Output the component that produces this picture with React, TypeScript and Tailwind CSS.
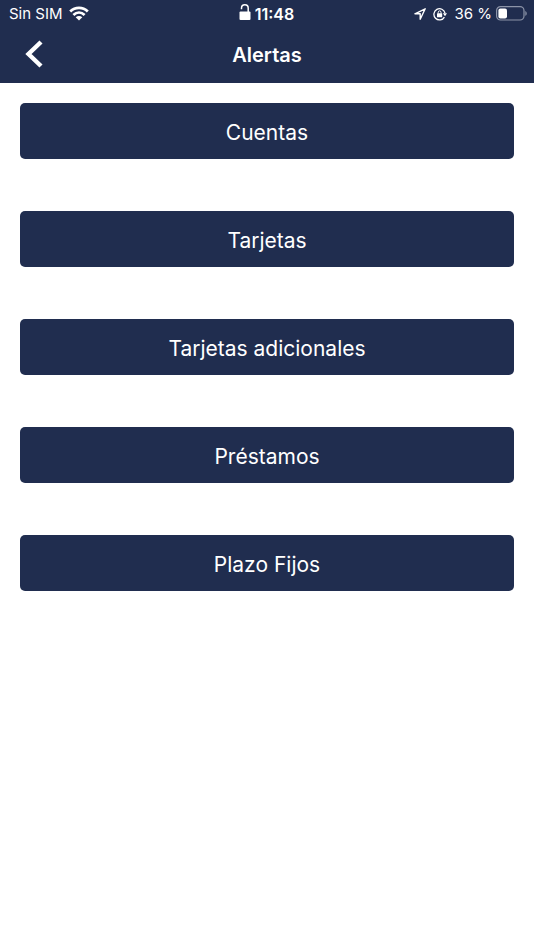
const sections = ['Cuentas', 'Tarjetas', 'Tarjetas adicionales', 'Préstamos', 'Plazo Fijos'];

function WifiIcon() {
  return (
    <svg className="h-4 w-5" viewBox="0 0 20 16" fill="none" stroke="white" strokeWidth="2.8" aria-hidden="true">
      <path d="M1.2 5.5C6.2 0.7 13.8 0.7 18.8 5.5" />
      <path d="M4.4 9C7.8 5.8 12.2 5.8 15.6 9" />
      <path d="M10 14.5 6.7 11.3C8.7 9.5 11.3 9.5 13.3 11.3Z" fill="white" stroke="none" />
    </svg>
  );
}

function UnlockIcon() {
  return (
    <svg className="h-4 w-3" viewBox="0 0 12 16" fill="none" aria-hidden="true">
      <rect x="0.5" y="7.4" width="11" height="8.6" rx="1" fill="white" />
      <path d="M2.5 5.2V4.2C2.5 -0.4 9.2 -0.4 9.2 4.2V8.5" stroke="white" strokeWidth="1.5" />
    </svg>
  );
}

function LocationIcon() {
  return (
    <svg className="h-3 w-3" viewBox="0 0 12 12" fill="none" stroke="white" strokeWidth="1.4" strokeLinejoin="round" aria-hidden="true">
      <path d="M11.2 0.8 0.9 5.8H6.2V11.2Z" />
    </svg>
  );
}

function RotationLockIcon() {
  return (
    <svg className="h-[14px] w-[14px]" viewBox="0 0 14 14" fill="none" aria-hidden="true">
      <path d="M11.4 10.1A5.6 5.6 0 1 1 12 6.2" stroke="white" strokeWidth="1.3" />
      <path d="M9.8 6.3H14L12 9.2Z" fill="white" />
      <rect x="4" y="6.3" width="5.2" height="3.9" rx="0.5" fill="white" />
      <path d="M5.2 6.5V5.3C5.2 3.4 8 3.4 8 5.3V6.5" stroke="white" strokeWidth="1" />
    </svg>
  );
}

function BatteryIcon() {
  return (
    <svg className="h-[15px] w-[31px]" viewBox="0 0 31 15" fill="none" aria-hidden="true">
      <rect x="0.6" y="0.6" width="27.4" height="13.4" rx="4" stroke="#8c94a8" strokeWidth="1.2" />
      <rect x="2.4" y="2.4" width="8.6" height="10" rx="2" fill="white" />
      <path d="M29.3 5C31.2 5.8 31.2 9 29.3 9.8Z" fill="#8c94a8" />
    </svg>
  );
}

export default function App() {
  return (
    <div className="min-h-screen bg-white font-['Inter','Liberation_Sans',sans-serif] text-white">
      <header className="bg-[#202d4f]">
        <div className="grid h-[27px] grid-cols-[1fr_auto_1fr] items-center pr-[7px] pl-[9px] text-[15px] leading-5">
          <div className="flex items-center gap-[6px]">
            <span>Sin SIM</span>
            <WifiIcon />
          </div>
          <div className="flex items-center gap-1 pr-[3px] text-base leading-5 font-semibold">
            <span className="pb-1">
              <UnlockIcon />
            </span>
            <span>11:48</span>
          </div>
          <div className="flex items-center justify-end">
            <LocationIcon />
            <span className="px-[7px]">
              <RotationLockIcon />
            </span>
            <span className="pr-1">36 %</span>
            <BatteryIcon />
          </div>
        </div>
        <div className="grid h-14 grid-cols-[64px_1fr_64px] items-center">
          <button type="button" aria-label="Volver" className="flex h-full items-center pb-[2px] pl-6">
            <svg className="h-7 w-5" viewBox="0 0 20 28" fill="none" stroke="white" strokeWidth="4.4" aria-hidden="true">
              <path d="M17 2 4.5 14 17 26" />
            </svg>
          </button>
          <h1 className="text-center text-xl font-semibold">Alertas</h1>
        </div>
      </header>
      <main className="flex flex-col gap-13 p-5">
        {sections.map((name) => (
          <button key={name} type="button" className="h-14 w-full rounded-[5px] bg-[#202d4f] pt-[3px] text-[21px]">
            {name}
          </button>
        ))}
      </main>
    </div>
  );
}
